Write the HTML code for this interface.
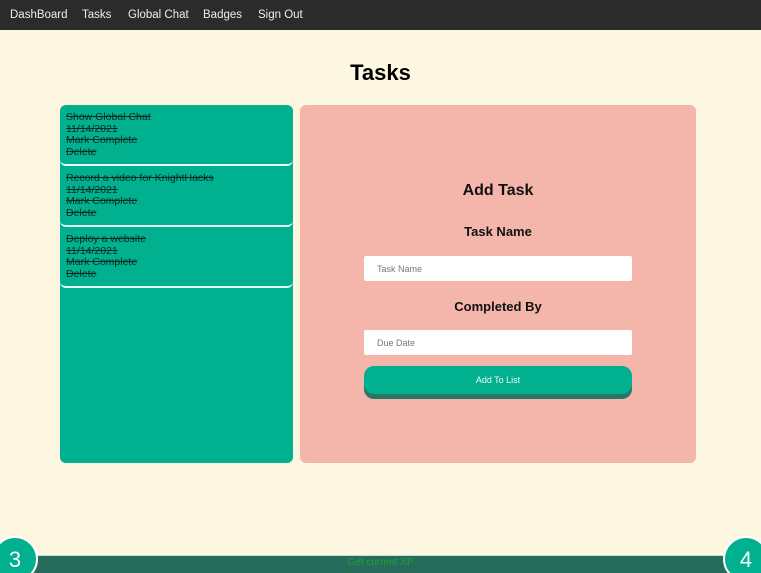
<!DOCTYPE html>
<html style="overflow:hidden;height:573px"><head><style>
*{margin:0;padding:0;box-sizing:border-box}
body{width:761px;height:573px;overflow:hidden;background:#fdf6e0;font-family:"Liberation Sans",sans-serif;position:relative}
.nav{height:30px;background:#2b2b2b;color:#eee;font-size:11.5px;position:relative}
.nav span{position:absolute;top:9px}
h1{position:absolute;top:60px;width:100%;text-align:center;font-size:22px;font-weight:bold;color:#000}
.left{position:absolute;left:60px;top:105px;width:233px;height:358px;background:#00b08e;border-radius:6px;overflow:hidden}
.item{height:61px;border-bottom:2px solid #e8f8f4;border-radius:0 0 6px 6px;padding:7px 6px 0;font-size:10.5px;line-height:11.7px;text-decoration:line-through;color:#0a2a22}
.right{position:absolute;left:300px;top:105px;width:396px;height:358px;background:#f4b6aa;border-radius:6px}
.t{position:absolute;width:100%;text-align:center;font-weight:bold;color:#111}
.inp{position:absolute;left:64px;width:268px;height:25px;background:#fff;border-radius:2px;font-size:9px;color:#777;padding:8px 0 0 13px}
.btn{position:absolute;left:64px;top:261px;width:268px;height:28px;background:#00b08e;border-radius:10px;box-shadow:0 5px 0 #2a7565;color:#eefaf6;font-size:9px;text-align:center;line-height:28px}
.bar{position:absolute;left:0;top:555px;width:761px;height:18px;background:#276b5a;border-top:1px solid #bfe6d6;text-align:center;color:#1aa33a;font-size:10px;line-height:14px}
.c{position:absolute;top:536px;width:46px;height:46px;border-radius:50%;background:#00b08e;border:2px solid #fff;color:#fff;font-size:22px;text-align:center;line-height:44px}
</style></head><body>
<div class="nav"><span style="left:10px">DashBoard</span><span style="left:82px">Tasks</span><span style="left:128px">Global Chat</span><span style="left:203px">Badges</span><span style="left:258px">Sign Out</span></div>
<h1>Tasks</h1>
<div class="left">
<div class="item">Show Global Chat<br>11/14/2021<br>Mark Complete<br>Delete</div>
<div class="item">Record a video for KnightHacks<br>11/14/2021<br>Mark Complete<br>Delete</div>
<div class="item">Deploy a website<br>11/14/2021<br>Mark Complete<br>Delete</div>
</div>
<div class="right">
<div class="t" style="top:77px;font-size:16px">Add Task</div>
<div class="t" style="top:119px;font-size:13px">Task Name</div>
<div class="inp" style="top:151px">Task Name</div>
<div class="t" style="top:194px;font-size:13px">Completed By</div>
<div class="inp" style="top:225px">Due Date</div>
<div class="btn">Add To List</div>
</div>
<div class="bar">Get current XP</div>
<div class="c" style="left:-8px">3</div>
<div class="c" style="left:723px">4</div>
</body></html>
